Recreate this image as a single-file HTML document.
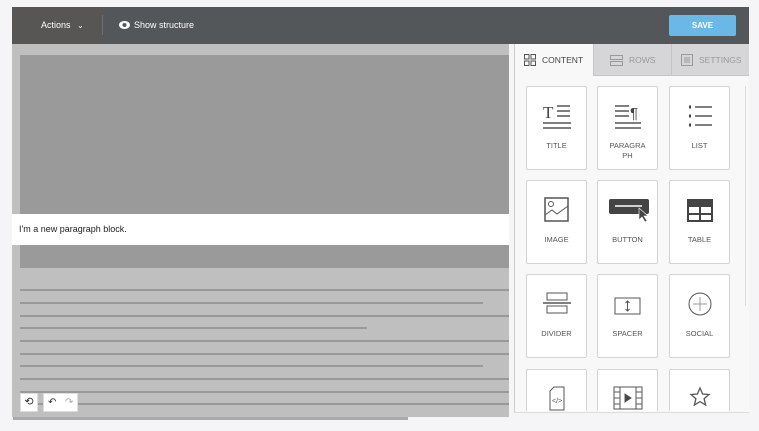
<!DOCTYPE html>
<html><head><meta charset="utf-8"><style>
*{margin:0;padding:0;box-sizing:border-box}
html,body{width:759px;height:431px;overflow:hidden}
body{background:#f5f5f7;position:relative;font-family:"Liberation Sans",sans-serif}
.abs{position:absolute}
.top{left:12px;top:7px;width:737px;height:37px;background:#54575a}
.act{left:12px;top:7px;width:90px;height:37px;background:#575655;color:#fff;font-size:9px;line-height:37px;padding-left:29px}
.sep{left:102px;top:15px;width:1px;height:20px;background:#6a6c6e}
.show{left:119px;top:7px;color:#fff;font-size:9px;line-height:37px}
.save{left:669px;top:15px;width:67px;height:21px;background:#6bb8e6;border-radius:2px;color:#fff;font-size:8px;font-weight:bold;text-align:center;line-height:21px}
.canvas{left:12px;top:44px;width:497px;height:373px;background:#bfbfbf}
.dark{left:20px;top:55px;width:489px;height:213px;background:#9a9a9a}
.para{left:12px;top:214px;width:497px;height:31px;background:#fff;font-size:9px;color:#222;line-height:31px;padding-left:7px}
.ln{left:20px;height:2px;background:#999}
.bt{background:#fff;border:1px solid #ddd;height:19px;top:393px}
.panel{left:514px;top:44px;width:235px;height:369px;background:#f8f8f8;border-left:1px solid #ccc;border-bottom:1px solid #ddd}
.tab{top:44px;height:32px;font-size:8.5px;line-height:32px;color:#999;background:#d6d6d8;border-left:1px solid #c4c4c4;border-bottom:1px solid #c4c4c4}
.card{width:61px;height:84px;background:#fff;border:1px solid #d4d4d4;border-radius:2px;font-size:7.5px;color:#555;text-align:center}
.card svg{position:absolute;left:15px;top:14px}
.card span{position:absolute;left:0;right:0;top:54px;line-height:10px}
</style></head><body>
<div class="abs top"></div>
<div class="abs act">Actions <span style="font-size:8px;margin-left:4px">⌄</span></div>
<div class="abs sep"></div>
<div class="abs show"><svg width="11" height="8" viewBox="0 0 11 8" style="vertical-align:-1px;margin-right:4px"><ellipse cx="5.5" cy="4" rx="5.5" ry="4" fill="#fff"/><circle cx="5.5" cy="4" r="2" fill="#54575a"/></svg>Show structure</div>
<div class="abs save">SAVE</div>

<div class="abs canvas"></div>
<div class="abs dark"></div>
<div class="abs para">I'm a new paragraph block.</div>
<div class="abs ln" style="top:289px;width:489px"></div>
<div class="abs ln" style="top:302px;width:463px"></div>
<div class="abs ln" style="top:315px;width:489px"></div>
<div class="abs ln" style="top:327px;width:347px"></div>
<div class="abs ln" style="top:340px;width:489px"></div>
<div class="abs ln" style="top:353px;width:489px"></div>
<div class="abs ln" style="top:365px;width:463px"></div>
<div class="abs ln" style="top:378px;width:489px"></div>
<div class="abs ln" style="top:391px;width:489px"></div>
<div class="abs ln" style="top:403px;width:489px"></div>
<div class="abs" style="left:13px;top:417px;width:395px;height:3px;background:#aaa"></div>
<div class="abs bt" style="left:20px;width:18px;font-size:11px;text-align:center;line-height:17px;color:#333">⟲</div>
<div class="abs bt" style="left:43px;width:35px;font-size:10px;line-height:17px;color:#333"><span style="position:absolute;left:4px">↶</span><span style="position:absolute;left:21px;color:#aaa">↷</span></div>

<div class="abs panel"></div>
<div class="abs tab" style="left:515px;width:78px;background:#f8f8f8;border:none;color:#444"><svg width="12" height="12" viewBox="0 0 12 12" style="position:absolute;left:9px;top:10px" fill="none" stroke="#555"><rect x=".5" y=".5" width="4.5" height="4.5"/><rect x="7" y=".5" width="4.5" height="4.5"/><rect x=".5" y="7" width="4.5" height="4.5"/><rect x="7" y="7" width="4.5" height="4.5"/></svg><span style="position:absolute;left:27px">CONTENT</span></div>
<div class="abs tab" style="left:593px;width:78px"><svg width="13" height="11" viewBox="0 0 13 11" style="position:absolute;left:16px;top:11px" fill="none" stroke="#999"><rect x=".5" y=".5" width="12" height="4"/><rect x=".5" y="6.5" width="12" height="4"/></svg><span style="position:absolute;left:35px">ROWS</span></div>
<div class="abs tab" style="left:671px;width:78px"><svg width="12" height="12" viewBox="0 0 12 12" style="position:absolute;left:9px;top:10px" fill="none" stroke="#999"><rect x=".5" y=".5" width="11" height="11"/><path d="M3 4h6M3 6h6M3 8h6"/></svg><span style="position:absolute;left:27px">SETTINGS</span></div>
<div class="abs" style="left:745px;top:86px;width:1px;height:220px;background:#ddd"></div>

<div class="abs card" style="left:526px;top:86px"><svg width="30" height="30" viewBox="0 0 30 30"><text x="1" y="17" font-family="Liberation Serif" font-size="17" fill="#444">T</text><path d="M15 5h13M15 10h13M15 15h13M1 22h28M1 27h28" stroke="#555" stroke-width="1.5"/></svg><span>TITLE</span></div>
<div class="abs card" style="left:597px;top:86px"><svg width="30" height="30" viewBox="0 0 30 30"><path d="M2 5h14M2 10h14M2 15h14M2 22h26M2 27h26" stroke="#555" stroke-width="1.5"/><text x="17" y="17" font-size="15" fill="#444">¶</text></svg><span>PARAGRA<br>PH</span></div>
<div class="abs card" style="left:669px;top:86px"><svg width="30" height="30" viewBox="0 0 30 30"><path d="M4 6h2M4 15h2M4 24h2" stroke="#444" stroke-width="3"/><path d="M10 6h17M10 15h17M10 24h17" stroke="#555" stroke-width="1.5"/></svg><span>LIST</span></div>

<div class="abs card" style="left:526px;top:180px"><svg width="30" height="30" viewBox="0 0 30 30" fill="none" stroke="#555"><rect x="3" y="3" width="23" height="23" stroke-width="1.5"/><circle cx="9" cy="9" r="2.5"/><path d="M3 20l7-5 5 4 11-8"/></svg><span>IMAGE</span></div>
<div class="abs card" style="left:597px;top:180px"><svg width="42" height="30" viewBox="0 0 42 30" style="left:10px"><rect x="1" y="4" width="40" height="15" rx="2" fill="#444"/><path d="M7 11h27" stroke="#fff" stroke-width="1.5"/><path d="M31 13v12l3-3 3 5 2-1-3-5h4z" fill="#444" stroke="#fff" stroke-width=".6"/></svg><span>BUTTON</span></div>
<div class="abs card" style="left:669px;top:180px"><svg width="30" height="30" viewBox="0 0 30 30"><rect x="2" y="4" width="26" height="23" fill="#444"/><rect x="4" y="12" width="10" height="6" fill="#fff"/><rect x="16" y="12" width="10" height="6" fill="#fff"/><rect x="4" y="20" width="10" height="5" fill="#fff"/><rect x="16" y="20" width="10" height="5" fill="#fff"/></svg><span>TABLE</span></div>

<div class="abs card" style="left:526px;top:274px"><svg width="30" height="30" viewBox="0 0 30 30" fill="none" stroke="#555"><rect x="5" y="4" width="20" height="7"/><rect x="5" y="17" width="20" height="7"/><path d="M1 14h28" stroke-width="1.5"/></svg><span>DIVIDER</span></div>
<div class="abs card" style="left:597px;top:274px"><svg width="30" height="30" viewBox="0 0 30 30" fill="none" stroke="#555"><rect x="2" y="9" width="25" height="16"/><path d="M14.5 12v10M12.5 14l2-2 2 2M12.5 20l2 2 2-2"/></svg><span>SPACER</span></div>
<div class="abs card" style="left:669px;top:274px"><svg width="30" height="30" viewBox="0 0 30 30" fill="none" stroke="#555"><circle cx="15" cy="15" r="11"/><path d="M15 8v14M8 15h14" stroke="#999"/></svg><span>SOCIAL</span></div>

<div style="position:absolute;left:515px;top:365px;width:230px;height:46px;overflow:hidden">
<div class="abs card" style="left:11px;top:4px"><svg width="30" height="30" viewBox="0 0 30 30" fill="none" stroke="#555" style="top:16px"><path d="M8 5l4-4h10v23H8z"/><text x="10" y="17" font-size="7" fill="#555" stroke="none">&lt;/&gt;</text></svg></div>
<div class="abs card" style="left:82px;top:4px"><svg width="30" height="30" viewBox="0 0 30 30" fill="none" stroke="#555" style="top:16px"><rect x="1" y="1" width="28" height="22"/><path d="M7 1v22M23 1v22M1 6h6M1 12h6M1 18h6M23 6h6M23 12h6M23 18h6"/><path d="M12 8l6 4-6 4z" fill="#444"/></svg></div>
<div class="abs card" style="left:154px;top:4px"><svg width="30" height="30" viewBox="0 0 30 30" style="top:16px"><path d="M15 2l2.6 6 6.4.5-4.9 4.2 1.5 6.3L15 15.6 9.4 19l1.5-6.3L6 8.5l6.4-.5z" fill="none" stroke="#555" stroke-width="1.3"/></svg></div>
</div>
</body></html>
